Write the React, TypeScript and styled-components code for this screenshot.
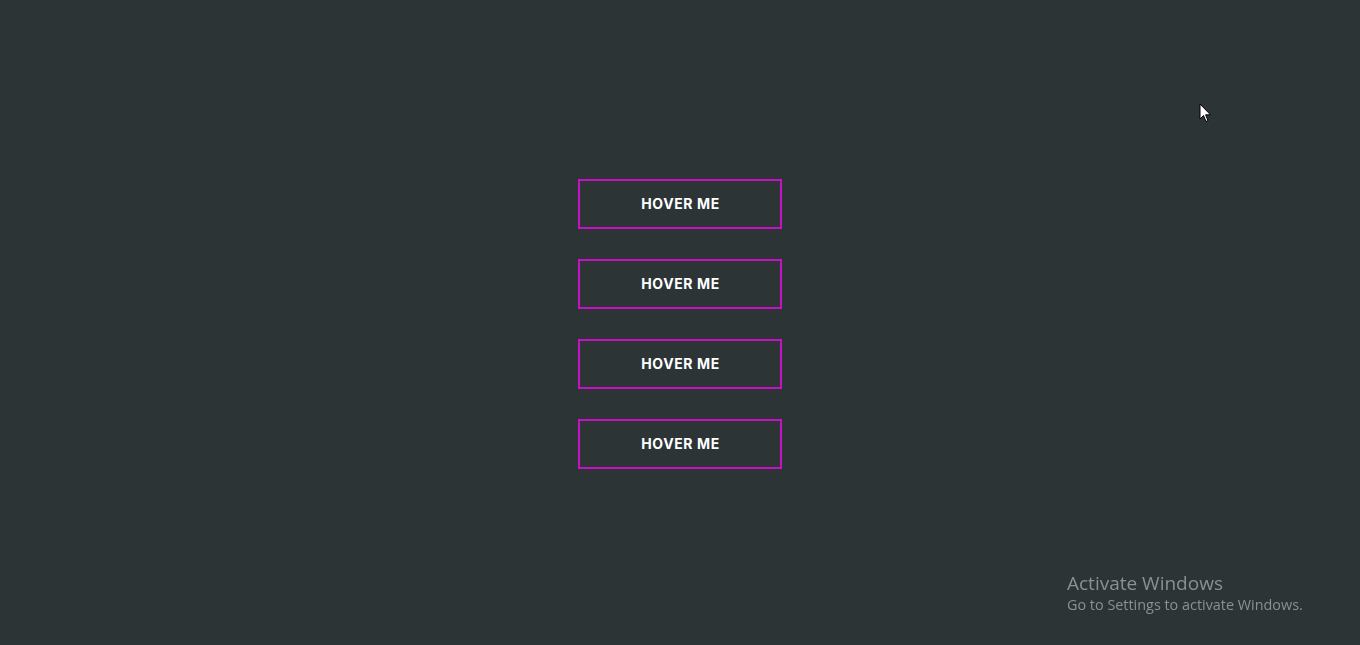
import styled, { createGlobalStyle } from 'styled-components';

const GlobalStyle = createGlobalStyle`
    html, body {
        margin: 0;
        padding: 0;
        background: #2d3436;
    }
    * {
        box-sizing: border-box;
    }
`;

const Page = styled.main`
    align-items: center;
    display: flex;
    height: 100vh;
    justify-content: center;
    padding-top: 2px;
    width: 100%;
`;

const ButtonList = styled.div`
    display: flex;
    flex-direction: column;
    gap: 30px;
`;

const HoverButton = styled.button`
    background: transparent;
    border: 2px solid #c711c7;
    color: #ffffff;
    cursor: pointer;
    font-family: Inter, "Open Sans", sans-serif;
    font-size: 14px;
    font-weight: 700;
    height: 50px;
    letter-spacing: 0.6px;
    padding: 0 0 0 1px;
    width: 204px;
    transition: all .3s;
    &:hover {
        background: #c711c7;
    }
`;

const Watermark = styled.div`
    color: #8b9091;
    font-family: "Open Sans", "Noto Sans", sans-serif;
    left: 1067px;
    pointer-events: none;
    position: fixed;
    top: 571px;
    white-space: nowrap;
`;

const WatermarkTitle = styled.div`
    font-size: 19px;
    line-height: 24px;
`;

const WatermarkText = styled.div`
    font-size: 14.4px;
    line-height: 20px;
`;

const Cursor = styled.svg`
    left: 1199px;
    pointer-events: none;
    position: fixed;
    top: 103px;
`;

export default function App() {
    const buttons = [1, 2, 3, 4];

    return (
        <>
            <GlobalStyle />
            <Page>
                <ButtonList>
                    {buttons.map(id => (
                        <HoverButton key={id}>HOVER ME</HoverButton>
                    ))}
                </ButtonList>
            </Page>
            <Watermark>
                <WatermarkTitle>Activate Windows</WatermarkTitle>
                <WatermarkText>Go to Settings to activate Windows.</WatermarkText>
            </Watermark>
            <Cursor width="13" height="20" viewBox="0 0 13 20">
                <path d="M1 1 L1 16 L4.5 12.5 L7 18.5 L9 17.6 L6.6 11.8 L11.5 11.8 Z" fill="#fff" stroke="#000" strokeWidth="1" />
            </Cursor>
        </>
    )
};
